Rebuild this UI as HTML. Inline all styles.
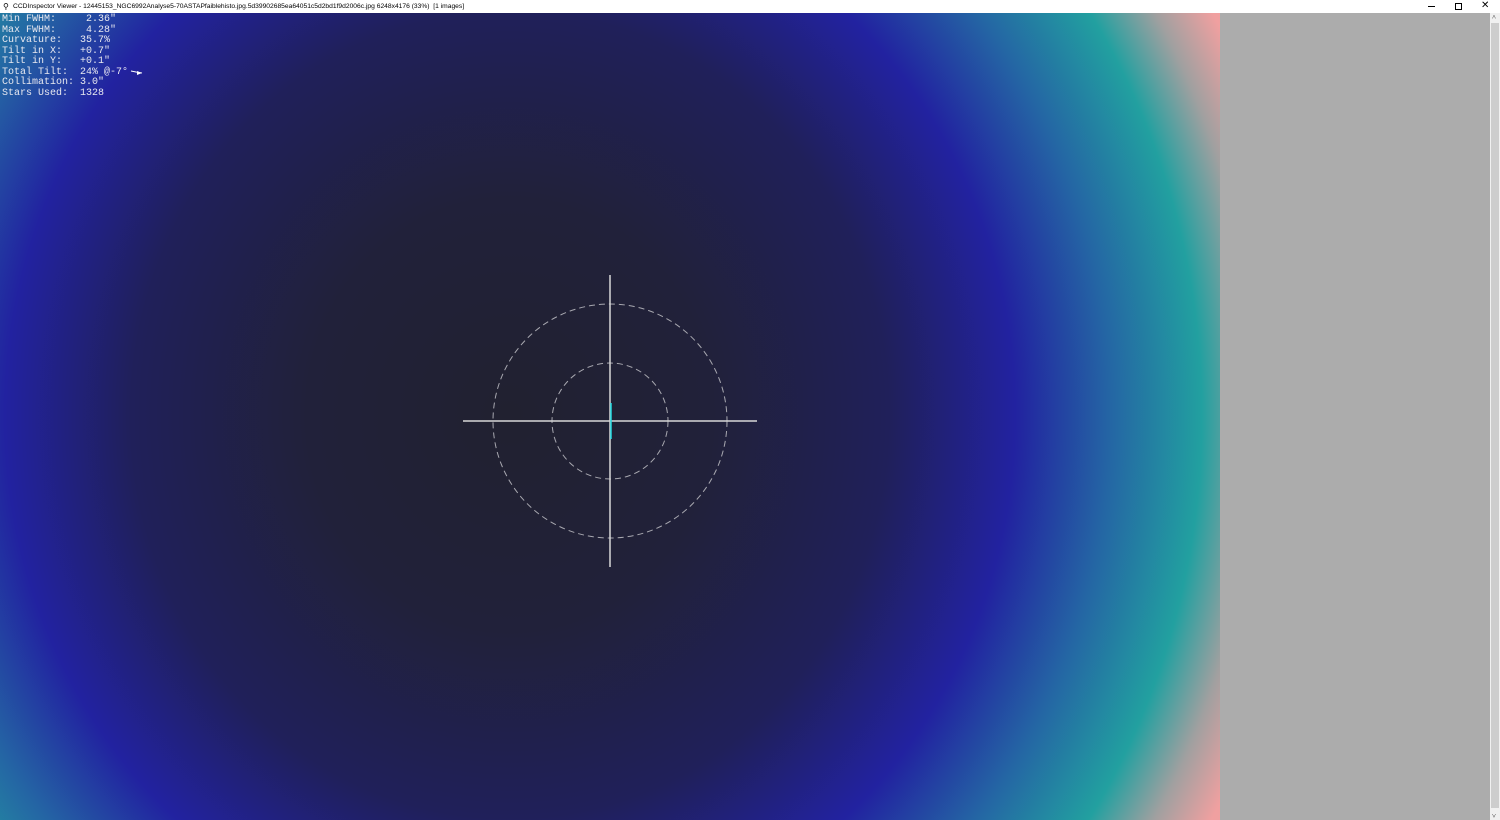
<!DOCTYPE html>
<html><head><meta charset="utf-8"><style>
html,body{margin:0;padding:0;width:1500px;height:820px;overflow:hidden;background:#acacac;}
#title{position:absolute;left:0;top:0;width:1500px;height:13px;background:#fff;font:6.7px "Liberation Sans",sans-serif;color:#000;line-height:13px;}
#title .t{position:absolute;left:13px;top:0;white-space:nowrap;}
#img{position:absolute;left:0;top:13px;width:1220px;height:807px;
background:radial-gradient(ellipse 505px 538px at 510px 402px,#212130 0%,#21213a 40%,#20205a 75%,#2222a0 100%,#2466a4 119%,#22a0a0 137%,#a0a0a0 148%,#f0a0a0 158%,#f8a0a0 300%);}
#txt{position:absolute;left:2px;top:15px;font:10px/10.5px "Liberation Mono",monospace;color:#e8e8f0;white-space:pre;}
#sb{position:absolute;left:1490px;top:13px;width:10px;height:807px;background:#f0f0f0;}
#sb .th{position:absolute;left:1px;top:10px;width:8px;height:785px;background:#cdcdcd;}
</style></head><body>
<div id="title"><span style="position:absolute;left:3px;top:0;font-size:8px">⚲</span><span class="t">CCDInspector Viewer - 12445153_NGC6992Analyse5-70ASTAPfaiblehisto.jpg.5d39902685ea64051c5d2bd1f9d2006c.jpg 6248x4176 (33%)&nbsp; [1 images]</span>
<span style="position:absolute;left:1428px;top:6px;width:7px;height:1px;background:#000"></span>
<span style="position:absolute;left:1455px;top:3px;width:5px;height:5px;border:1px solid #000;"></span>
<span style="position:absolute;left:1481px;top:-1px;font-size:10px">✕</span></div>
<div id="img"></div>
<div id="sb"><div class="th"></div><span style="position:absolute;left:2px;top:0;font-size:7px">˄</span><span style="position:absolute;left:2px;bottom:0;font-size:7px">˅</span></div>
<div id="txt">Min FWHM:     2.36"
Max FWHM:     4.28"
Curvature:   35.7%
Tilt in X:   +0.7"
Tilt in Y:   +0.1"
Total Tilt:  24% @-7°
Collimation: 3.0"
Stars Used:  1328</div>
<svg width="1500" height="820" style="position:absolute;left:0;top:0">
<path d="M131 71 L136 72 L142 73" fill="none" stroke="#fff" stroke-width="1"/>
<path d="M137 71 L142 73 L137 75 Z" fill="#fff"/>
<circle cx="610" cy="421" r="117" fill="none" stroke="#a8a8b0" stroke-width="1" stroke-dasharray="6,4"/>
<circle cx="610" cy="421" r="58" fill="none" stroke="#a8a8b0" stroke-width="1" stroke-dasharray="6,4"/>
<line x1="463" y1="421" x2="757" y2="421" stroke="#d8d8d8" stroke-width="1.5"/>
<line x1="610" y1="275" x2="610" y2="567" stroke="#d8d8d8" stroke-width="1.5"/>
<line x1="611" y1="403" x2="611" y2="439" stroke="#20d8e0" stroke-width="1.5"/>
</svg>
</body></html>
